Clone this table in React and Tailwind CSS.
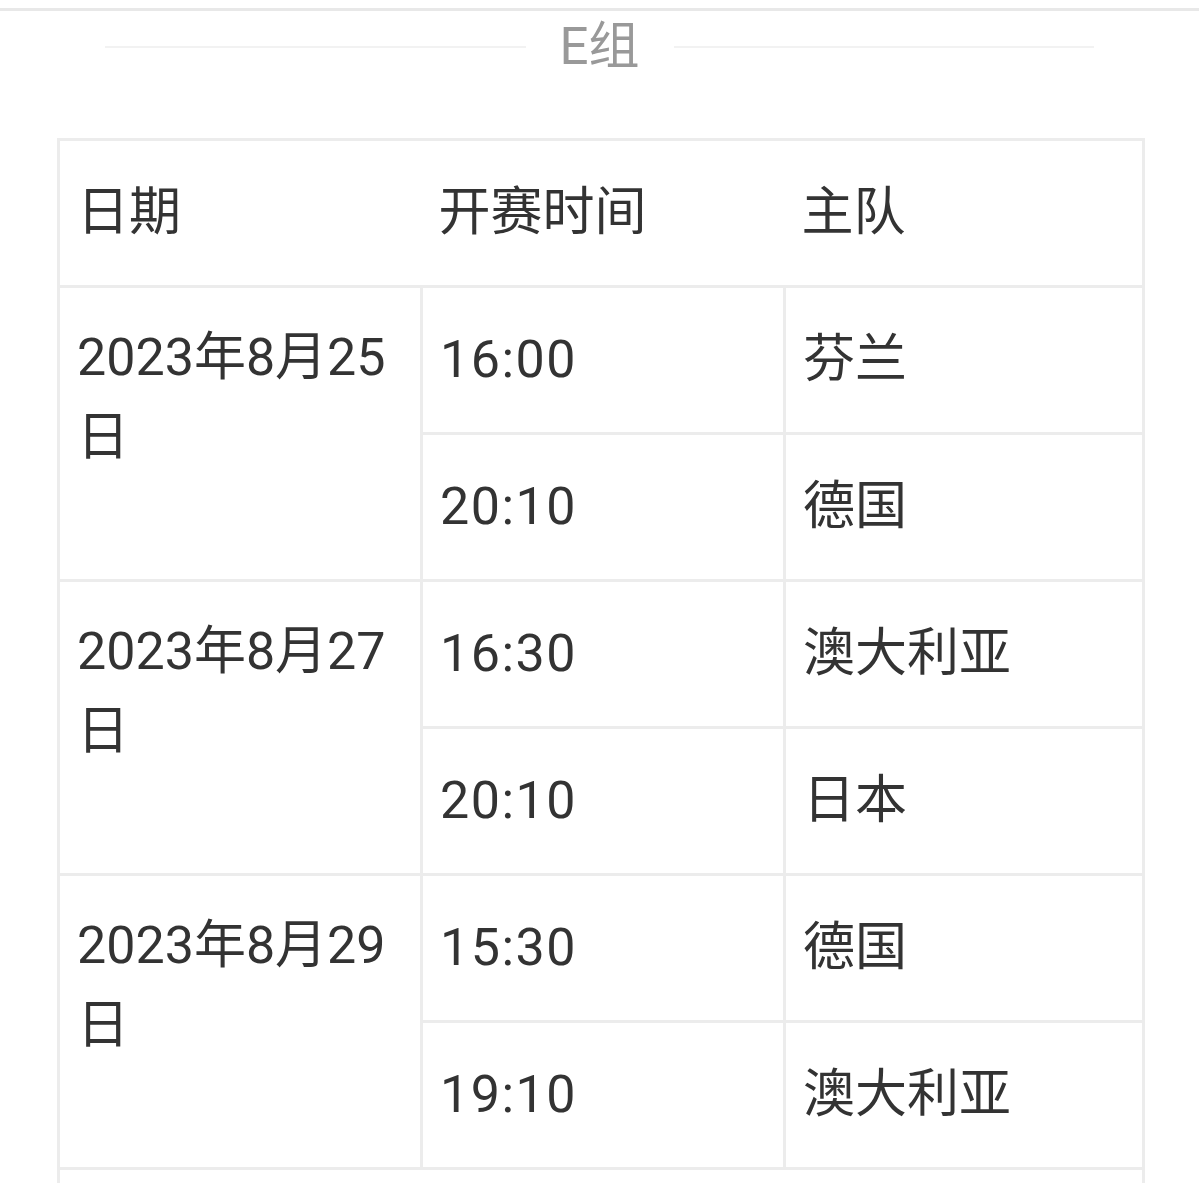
import React from "react";

const groups = [
  { date: "2023年8月25日", rows: [["16:00", "芬兰"], ["20:10", "德国"]] },
  { date: "2023年8月27日", rows: [["16:30", "澳大利亚"], ["20:10", "日本"]] },
  { date: "2023年8月29日", rows: [["15:30", "德国"], ["19:10", "澳大利亚"]] },
];

export default function App() {
  return (
    <div className="w-full min-h-screen bg-white text-[#333] font-['Roboto','Noto_Sans_CJK_SC',sans-serif]">
      <div className="h-[8px]" />
      <div className="h-[3px] bg-[#e8e8e8]" />
      <div className="flex items-center px-[105px] h-[72px]">
        <div className="flex-1 h-[2px] bg-[#f2f2f2]" />
        <div className="mx-[34px] text-[51px] leading-[72px] text-[#999]">E组</div>
        <div className="flex-1 h-[2px] bg-[#f2f2f2]" />
      </div>
      <div className="h-[55px]" />
      <table className="ml-[57px] w-[1088px] table-fixed border-collapse text-[52px] leading-[80px]">
        <colgroup>
          <col className="w-[363px]" />
          <col className="w-[363px]" />
          <col />
        </colgroup>
        <thead>
          <tr>
            <th className="text-left font-normal px-[17px] py-[32px] border-y-[3px] border-l-[3px] border-[#ececec]">日期</th>
            <th className="text-left font-normal px-[17px] py-[32px] border-y-[3px] border-[#ececec]">开赛时间</th>
            <th className="text-left font-normal px-[17px] py-[32px] border-y-[3px] border-r-[3px] border-[#ececec]">主队</th>
          </tr>
        </thead>
        <tbody>
          {groups.map((g) =>
            g.rows.map((r, i) => (
              <tr key={g.date + i} className="h-[147px]">
                {i === 0 && (
                  <td rowSpan={2} className="align-top px-[17px] pt-[30px] border-[3px] border-[#ececec]">
                    {g.date}
                  </td>
                )}
                <td className="align-middle px-[17px] py-[32px] tracking-[1.5px] border-[3px] border-[#ececec]">{r[0]}</td>
                <td className="align-middle px-[17px] py-[32px] border-[3px] border-[#ececec]">{r[1]}</td>
              </tr>
            ))
          )}
          <tr>
            <td colSpan={3} className="h-[147px] border-[3px] border-[#ececec]" />
          </tr>
        </tbody>
      </table>
    </div>
  );
}
